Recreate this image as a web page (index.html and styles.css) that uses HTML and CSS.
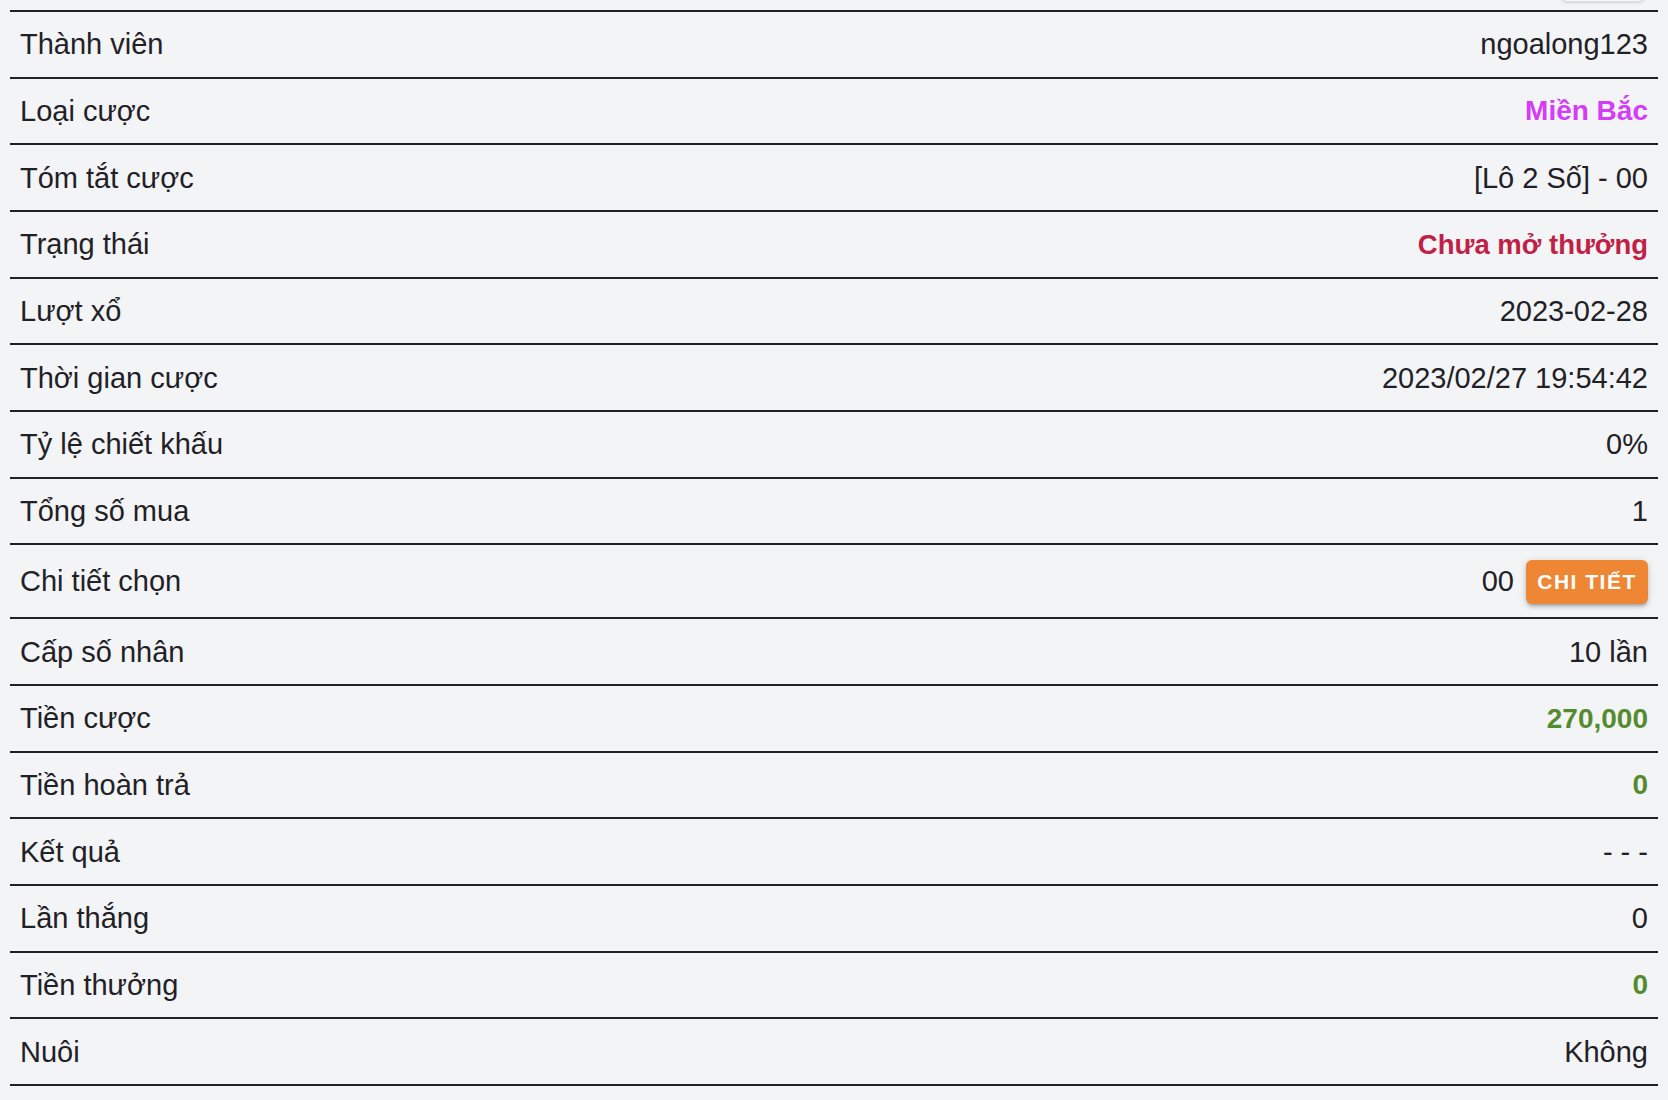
FILE: index.html
```html
<!DOCTYPE html>
<html lang="vi">
<head>
    <meta charset="UTF-8">
    <meta name="viewport" content="width=device-width, initial-scale=1.0">
    <title>Chi tiết cược</title>
    <link rel="stylesheet" href="styles.css">
</head>
<body>
<div class="prev">
    <span class="prev-btn"></span>
</div>

<div class="detail">
    <div class="row"><span class="label">Thành viên</span><span class="value">ngoalong123</span></div>
    <div class="row"><span class="label">Loại cược</span><span class="value purple">Miền Bắc</span></div>
    <div class="row"><span class="label">Tóm tắt cược</span><span class="value">[Lô 2 Số] - 00</span></div>
    <div class="row"><span class="label">Trạng thái</span><span class="value red">Chưa mở thưởng</span></div>
    <div class="row"><span class="label">Lượt xổ</span><span class="value">2023-02-28</span></div>
    <div class="row"><span class="label">Thời gian cược</span><span class="value">2023/02/27 19:54:42</span></div>
    <div class="row"><span class="label">Tỷ lệ chiết khấu</span><span class="value">0%</span></div>
    <div class="row"><span class="label">Tổng số mua</span><span class="value">1</span></div>
    <div class="row row-tall">
        <span class="label">Chi tiết chọn</span>
        <span class="value">00 <button class="btn-detail">Chi tiết</button></span>
    </div>
    <div class="row"><span class="label">Cấp số nhân</span><span class="value">10 lần</span></div>
    <div class="row"><span class="label">Tiền cược</span><span class="value green">270,000</span></div>
    <div class="row"><span class="label">Tiền hoàn trả</span><span class="value green">0</span></div>
    <div class="row"><span class="label">Kết quả</span><span class="value">- - -</span></div>
    <div class="row"><span class="label">Lần thắng</span><span class="value">0</span></div>
    <div class="row"><span class="label">Tiền thưởng</span><span class="value green">0</span></div>
    <div class="row"><span class="label">Nuôi</span><span class="value">Không</span></div>
</div>
</body>
</html>
```

FILE: styles.css
```css
body {
    font-family: "Liberation Sans", Arial, sans-serif;
    background: #f3f4f6;
    color: #1f2126;
    margin: 0;
    padding: 0;
}
.prev {
    height: 10px;
    overflow: hidden;
    display: flex;
    justify-content: flex-end;
    padding-right: 23px;
}
.prev-btn {
    display: block;
    width: 84px;
    height: 30px;
    margin-top: -29px;
    background: #f6f7f8;
    border-radius: 6px;
    box-shadow: 0 2px 3px rgba(0, 0, 0, 0.12);
}
.detail {
    margin: 0 10px;
    border-top: 2px solid #1f2126;
}
.row {
    box-sizing: border-box;
    height: 66.67px;
    padding: 1px 10px 0;
    border-bottom: 2px solid #1f2126;
    display: flex;
    align-items: center;
    justify-content: space-between;
    font-size: 29px;
}
.row-tall {
    height: 74px;
}
.value {
    display: flex;
    align-items: center;
    gap: 12px;
}
.purple {
    color: #d53cf5;
    font-weight: bold;
    font-size: 28px;
}
.red {
    color: #c01f47;
    font-weight: bold;
    font-size: 27.5px;
}
.green {
    color: #558b2f;
    font-weight: bold;
    font-size: 28px;
}
.btn-detail {
    height: 44px;
    width: 122px;
    padding: 0;
    border: none;
    border-radius: 6px;
    background: #ef8634;
    color: #ffffff;
    font-family: "Liberation Sans", Arial, sans-serif;
    font-size: 21px;
    font-weight: bold;
    letter-spacing: 1.5px;
    text-transform: uppercase;
    box-shadow: 0 3px 3px -2px rgba(0, 0, 0, 0.2), 0 3px 4px rgba(0, 0, 0, 0.14), 0 1px 8px rgba(0, 0, 0, 0.12);
    cursor: pointer;
}
```
